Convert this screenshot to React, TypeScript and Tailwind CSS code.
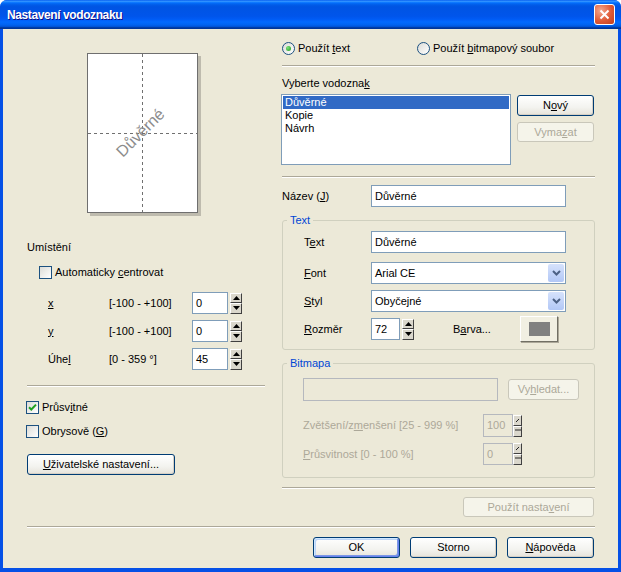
import type { ReactNode } from "react";

const TITLE_BG =
  "bg-[linear-gradient(180deg,#0058EE_0%,#3593FF_4%,#288EFF_6%,#127DFF_8%,#036FFC_10%,#0262EE_14%,#0057E5_20%,#0054E3_24%,#0055EB_56%,#005BF5_66%,#026AFE_76%,#0062EF_86%,#0052D6_92%,#0040AB_94%,#003092_100%)]";

function U({ c }: { c: string }) {
  return <span className="underline underline-offset-[1px]">{c}</span>;
}

function Checkbox({ checked }: { checked?: boolean }) {
  return (
    <div className="flex h-[13px] w-[13px] shrink-0 items-center justify-center border border-[#1C5180] bg-[linear-gradient(135deg,#DCDCD7,#FFFFFF)]">
      {checked && (
        <svg width="9" height="9" viewBox="0 0 9 9">
          <path d="M1 4.2l2.3 2.3L8 1.6" stroke="#21A121" strokeWidth="2" fill="none" />
        </svg>
      )}
    </div>
  );
}

function Radio({ checked }: { checked?: boolean }) {
  return (
    <div className="flex h-[13px] w-[13px] shrink-0 items-center justify-center rounded-full border border-[#1C5180] bg-[linear-gradient(135deg,#DCDCD7,#FFFFFF)]">
      {checked && <div className="h-[5px] w-[5px] rounded-full bg-[radial-gradient(circle_at_35%_35%,#7BE27A,#1E9B1E)]" />}
    </div>
  );
}

function Button({
  children,
  className,
  disabled,
  primary
}: {
  children: ReactNode;
  className: string;
  disabled?: boolean;
  primary?: boolean;
}) {
  const tone = disabled
    ? "border-[#C9C7BA] bg-[#F5F4EA] text-[#ACA899]"
    : primary
      ? "border-[#003C74] bg-[linear-gradient(180deg,#FFFFFF_0%,#F3F3EF_60%,#E6E3DA_100%)] text-black shadow-[inset_-1px_-1px_#6982EE,inset_1px_1px_#CEE7FF,inset_-2px_-2px_#7B97E6,inset_2px_2px_#BCD4F6]"
      : "border-[#003C74] bg-[linear-gradient(180deg,#FFFFFF_0%,#F3F3EF_60%,#E6E3DA_100%)] text-black shadow-[inset_-1px_-1px_#D6D0C5]";
  return (
    <div className={`flex shrink-0 items-center justify-center rounded-[3px] border ${tone} ${className}`}>
      {children}
    </div>
  );
}

function TextBox({ value, className, disabled }: { value?: string; className: string; disabled?: boolean }) {
  return (
    <div
      className={`flex shrink-0 items-center border pl-[3px] ${
        disabled ? "border-[#B5B8BE] bg-[#ECE9D8] text-[#ACA899]" : "border-[#7F9DB9] bg-white text-black"
      } ${className}`}
    >
      {value}
    </div>
  );
}

function Spin({ disabled }: { disabled?: boolean }) {
  const half =
    "flex flex-1 items-center justify-center border border-t-white border-l-white border-r-[#404040] border-b-[#404040] bg-[#DAD7CC]";
  return (
    <div className={`flex shrink-0 flex-col ${disabled ? "h-[22px] w-[9px]" : "h-[21px] w-[12px]"}`}>
      <div className={half}>
        {disabled ? (
          <svg width="5" height="5" viewBox="0 0 5 5">
            <path d="M1 4L4 1" stroke="#222" strokeWidth="1" />
          </svg>
        ) : (
          <svg width="7" height="4" viewBox="0 0 7 4">
            <path d="M3.5 0L7 4H0z" fill="#000" />
          </svg>
        )}
      </div>
      <div className={half}>
        {disabled ? (
          <svg width="6" height="5" viewBox="0 0 6 5">
            <path d="M0 1H6" stroke="#222" strokeWidth="1" />
          </svg>
        ) : (
          <svg width="7" height="4" viewBox="0 0 7 4">
            <path d="M0 0H7L3.5 4z" fill="#000" />
          </svg>
        )}
      </div>
    </div>
  );
}

function Combo({ value }: { value: string }) {
  return (
    <div className="flex h-[22px] w-[195px] shrink-0 items-stretch border border-[#7F9DB9] bg-white">
      <div className="flex flex-1 items-center pl-[3px]">{value}</div>
      <div className="m-px flex w-[16px] items-center justify-center rounded-[2px] bg-[linear-gradient(180deg,#D6E2FC,#B2C7F6)]">
        <svg width="9" height="6" viewBox="0 0 9 6">
          <path d="M1 1l3.5 3.5L8 1" stroke="#4D6185" strokeWidth="2" fill="none" />
        </svg>
      </div>
    </div>
  );
}

function Separator({ className }: { className: string }) {
  return <div className={`h-0 border-t border-b border-t-[#ACA899] border-b-white ${className}`} />;
}

function PaperPreview() {
  return (
    <div className="relative ml-[60px] mt-[11px] h-[160px] w-[111px] shrink-0 border border-[#6F6F6F] bg-white shadow-[3px_3px_0_#BEBBAE]">
      <svg className="absolute inset-0" width="109" height="158" viewBox="0 0 109 158">
        <path d="M54.5 0V158" stroke="#707070" strokeWidth="1" strokeDasharray="3 3" />
        <path d="M0 79.5H109" stroke="#707070" strokeWidth="1" strokeDasharray="3 3" />
      </svg>
      <span className="absolute left-1/2 top-1/2 -translate-x-[54%] -translate-y-1/2 -rotate-45 whitespace-nowrap text-[16px] leading-[18px] text-[#8C8C8C]">
        Důvěrné
      </span>
    </div>
  );
}

function LeftColumn() {
  return (
    <div className="flex w-[262px] shrink-0 flex-col pl-[24px]">
      <PaperPreview />
      <div className="mt-[28px] h-[13px]">Umístění</div>
      <div className="ml-[12px] mt-[12px] flex h-[13px] items-center gap-[3px]">
        <Checkbox />
        <span>
          Automaticky <U c="c" />
          entrovat
        </span>
      </div>
      <div className="mt-[13px] flex h-[22px] items-center">
        <span className="ml-[21px] w-[61px]">
          <U c="x" />
        </span>
        <span className="w-[83px]">[-100 - +100]</span>
        <TextBox value="0" className="h-[22px] w-[36px]" />
        <div className="ml-[2px]">
          <Spin />
        </div>
      </div>
      <div className="mt-[6px] flex h-[22px] items-center">
        <span className="ml-[21px] w-[61px]">
          <U c="y" />
        </span>
        <span className="w-[83px]">[-100 - +100]</span>
        <TextBox value="0" className="h-[22px] w-[36px]" />
        <div className="ml-[2px]">
          <Spin />
        </div>
      </div>
      <div className="mt-[6px] flex h-[22px] items-center">
        <span className="ml-[21px] w-[61px]">
          Úhe<U c="l" />
        </span>
        <span className="w-[83px]">[0 - 359 °]</span>
        <TextBox value="45" className="h-[22px] w-[36px]" />
        <div className="ml-[2px]">
          <Spin />
        </div>
      </div>
      <Separator className="mt-[15px] w-[238px]" />
      <div className="-ml-px mt-[14px] flex h-[13px] items-center gap-[3px]">
        <Checkbox checked />
        <span>
          Průsv<U c="i" />
          tné
        </span>
      </div>
      <div className="-ml-px mt-[11px] flex h-[13px] items-center gap-[3px]">
        <Checkbox />
        <span>
          Obrysově (<U c="G" />)
        </span>
      </div>
      <Button className="mt-[16px] h-[21px] w-[148px]">
        <span>
          <U c="U" />
          živatelské nastavení...
        </span>
      </Button>
    </div>
  );
}

function RightColumn() {
  return (
    <div className="ml-[17px] flex w-[313px] shrink-0 flex-col">
      <div className="flex h-[13px] items-center">
        <div className="flex w-[135px] items-center gap-[3px]">
          <Radio checked />
          <span>
            Použít <U c="t" />
            ext
          </span>
        </div>
        <div className="flex items-center gap-[3px]">
          <Radio />
          <span>
            Použít <U c="b" />
            itmapový soubor
          </span>
        </div>
      </div>
      <Separator className="mt-[10px] w-[313px]" />
      <div className="mt-[10px] h-[13px]">
        Vyberte vodozna<U c="k" />
      </div>
      <div className="mt-[4px] flex">
        <div className="-ml-px flex h-[71px] w-[230px] flex-col border border-[#7F9DB9] bg-white p-px">
          <div className="h-[13px] bg-[#316AC5] pl-[2px] text-white">Důvěrné</div>
          <div className="h-[13px] pl-[2px]">Kopie</div>
          <div className="h-[13px] pl-[2px]">Návrh</div>
        </div>
        <div className="ml-[6px] mt-px flex flex-col">
          <Button className="h-[21px] w-[77px]">
            <span>
              N<U c="o" />
              vý
            </span>
          </Button>
          <Button disabled className="mt-[6px] h-[20px] w-[77px]">
            <span>
              Vyma<U c="z" />
              at
            </span>
          </Button>
        </div>
      </div>
      <Separator className="mt-[11px] w-[313px]" />
      <div className="mt-[7px] flex h-[22px] items-center">
        <span className="w-[89px]">
          Název (<U c="J" />)
        </span>
        <TextBox value="Důvěrné" className="h-[22px] w-[195px]" />
      </div>

      <fieldset className="mt-[7px] flex w-[313px] flex-col rounded-[3px] border border-[#D0D0BF] pb-[9px] pl-[21px]">
        <legend className="-ml-[17px] h-[13px] px-[3px] text-[#0046D5]">Text</legend>
        <div className="mt-[4px] flex h-[22px] items-center">
          <span className="w-[67px]">
            T<U c="e" />
            xt
          </span>
          <TextBox value="Důvěrné" className="h-[22px] w-[195px]" />
        </div>
        <div className="mt-[9px] flex h-[22px] items-center">
          <span className="w-[67px]">
            <U c="F" />
            ont
          </span>
          <Combo value="Arial CE" />
        </div>
        <div className="mt-[6px] flex h-[22px] items-center">
          <span className="w-[67px]">
            <U c="S" />
            tyl
          </span>
          <Combo value="Obyčejné" />
        </div>
        <div className="mt-[6px] flex h-[22px] items-center">
          <span className="w-[67px]">
            <U c="R" />
            ozměr
          </span>
          <TextBox value="72" className="h-[22px] w-[29px]" />
          <div className="ml-[2px]">
            <Spin />
          </div>
          <span className="ml-[39px] w-[67px]">
            B<U c="a" />
            rva...
          </span>
          <div className="flex h-[26px] w-[38px] shrink-0 items-center justify-center border border-t-white border-l-white border-r-[#716F64] border-b-[#716F64] bg-[#F1EFE2] shadow-[1px_1px_0_#ACA899]">
            <div className="h-[14px] w-[21px] bg-[#808080]" />
          </div>
        </div>
      </fieldset>

      <fieldset className="mt-[7px] flex w-[313px] flex-col rounded-[3px] border border-[#D0D0BF] pb-[12px] pl-[20px] text-[#ACA899]">
        <legend className="-ml-[16px] h-[13px] px-[3px] text-[#0046D5]">Bitmapa</legend>
        <div className="mt-[8px] flex h-[23px] items-center">
          <TextBox disabled className="h-[23px] w-[195px]" />
          <Button disabled className="ml-[10px] h-[21px] w-[71px]">
            <span>
              Vy<U c="h" />
              ledat...
            </span>
          </Button>
        </div>
        <div className="mt-[13px] flex h-[23px] items-center">
          <span className="w-[180px]">
            Zvětšení/z<U c="m" />
            enšení [25 - 999 %]
          </span>
          <TextBox disabled value="100" className="h-[23px] w-[30px]" />
          <Spin disabled />
        </div>
        <div className="mt-[6px] flex h-[22px] items-center">
          <span className="w-[180px]">
            <U c="P" />
            růsvitnost [0 - 100 %]
          </span>
          <TextBox disabled value="0" className="h-[22px] w-[30px]" />
          <Spin disabled />
        </div>
      </fieldset>

      <Separator className="mt-[9px] w-[313px]" />
      <div className="mt-[8px] flex justify-end pr-px">
        <Button disabled className="h-[20px] w-[131px]">
          <span>
            Použít nasta<U c="v" />
            ení
          </span>
        </Button>
      </div>
    </div>
  );
}

export default function App() {
  return (
    <div className="flex h-[572px] w-[621px] flex-col overflow-hidden rounded-t-[7px] bg-[#0550E6] font-['Liberation_Sans',Arial,sans-serif] text-[11px] leading-[13px] text-black">
      <div className={`flex h-[29px] shrink-0 items-center pl-[7px] pr-[6px] ${TITLE_BG}`}>
        <span className="flex-1 pt-[2px] text-[12px] font-bold tracking-[-0.4px] text-white [text-shadow:1px_1px_#0F1089]">
          Nastavení vodoznaku
        </span>
        <div className="flex h-[21px] w-[21px] items-center justify-center rounded-[3px] border border-white bg-[radial-gradient(circle_at_30%_30%,#F3A88F,#E05A36_55%,#C13E1E)]">
          <svg width="11" height="11" viewBox="0 0 11 11">
            <path d="M1.5 1.5l8 8M9.5 1.5l-8 8" stroke="#fff" strokeWidth="2" />
          </svg>
        </div>
      </div>
      <div className="mx-[3px] mb-[4px] flex flex-1 flex-col bg-[#ECE9D8]">
        <div className="flex h-[497px] shrink-0 items-start pt-[13px]">
          <LeftColumn />
          <RightColumn />
        </div>
        <Separator className="ml-[24px] w-[568px]" />
        <div className="mt-[9px] flex justify-end gap-[10px] pr-[24px]">
          <Button primary className="h-[21px] w-[87px]">
            OK
          </Button>
          <Button className="h-[21px] w-[87px]">Storno</Button>
          <Button className="h-[21px] w-[87px]">
            <span>
              <U c="N" />
              ápověda
            </span>
          </Button>
        </div>
      </div>
    </div>
  );
}
